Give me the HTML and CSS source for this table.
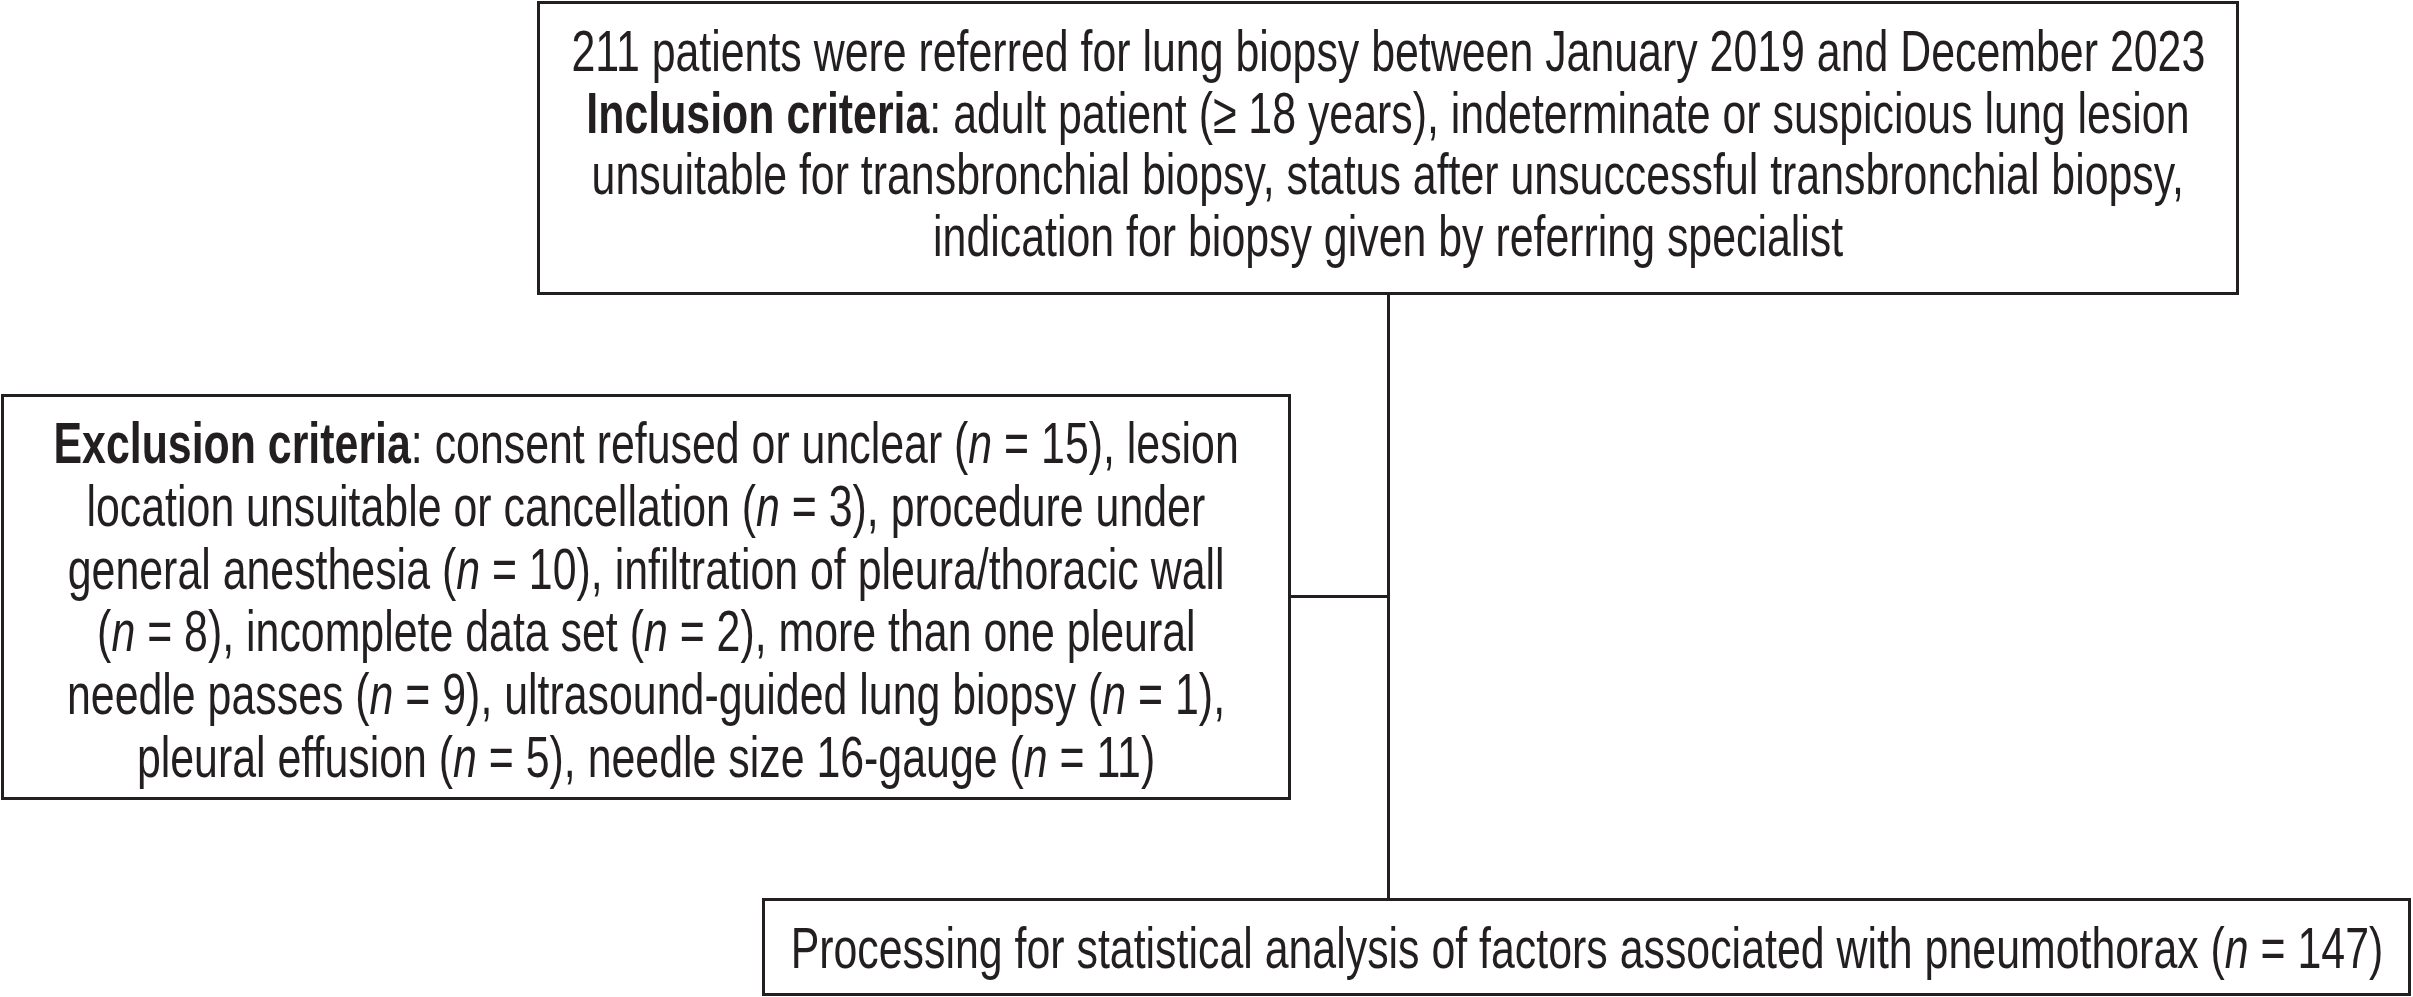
FILE: index.html
```html
<!DOCTYPE html>
<html lang="en">
<head>
<meta charset="utf-8">
<title>Flowchart</title>
<link rel="stylesheet" href="styles.css">
</head>
<body>
<div class="canvas">
  <div class="box box-top">
    <div class="line">211 patients were referred for lung biopsy between January 2019 and December 2023</div>
    <div class="line"><b>Inclusion criteria</b>: adult patient (≥ 18 years), indeterminate or suspicious lung lesion</div>
    <div class="line">unsuitable for transbronchial biopsy, status after unsuccessful transbronchial biopsy,</div>
    <div class="line">indication for biopsy given by referring specialist</div>
  </div>

  <div class="conn conn-v"></div>
  <div class="conn conn-h"></div>

  <div class="box box-excl">
    <div class="line"><b>Exclusion criteria</b>: consent refused or unclear (<i>n</i> = 15), lesion</div>
    <div class="line">location unsuitable or cancellation (<i>n</i> = 3), procedure under</div>
    <div class="line">general anesthesia (<i>n</i> = 10), infiltration of pleura/thoracic wall</div>
    <div class="line">(<i>n</i> = 8), incomplete data set (<i>n</i> = 2), more than one pleural</div>
    <div class="line">needle passes (<i>n</i> = 9), ultrasound-guided lung biopsy (<i>n</i> = 1),</div>
    <div class="line">pleural effusion (<i>n</i> = 5), needle size 16-gauge (<i>n</i> = 11)</div>
  </div>

  <div class="box box-final">
    <div class="line">Processing for statistical analysis of factors associated with pneumothorax (<i>n</i> = 147)</div>
  </div>
</div>
</body>
</html>
```
FILE: styles.css
```css
html, body {
  margin: 0;
  padding: 0;
  background: #ffffff;
}

.canvas {
  position: relative;
  width: 2413px;
  height: 997px;
  overflow: hidden;
  background: #ffffff;
  color: #231f20;
  font-family: "Liberation Sans Narrow", "Liberation Sans", Arial, sans-serif;
  font-stretch: condensed;
  font-size: 57px;
}

.box {
  position: absolute;
  box-sizing: border-box;
  border: 3px solid #231f20;
  background: #ffffff;
  display: flex;
  flex-direction: column;
  align-items: center;
}

.line {
  white-space: nowrap;
  transform: scaleX(0.752);
  transform-origin: center;
}

.line b {
  font-weight: bold;
}

.box-top {
  left: 537px;
  top: 1px;
  width: 1702px;
  height: 294px;
  padding-top: 17px;
  line-height: 61.5px;
}

.box-excl {
  left: 1px;
  top: 394px;
  width: 1290px;
  height: 406px;
  padding-top: 15px;
  line-height: 62.8px;
}

.box-final {
  left: 762px;
  top: 898px;
  width: 1649px;
  height: 98px;
  padding-top: 16px;
  line-height: 62px;
}

.conn {
  position: absolute;
  background: #231f20;
}

.conn-v {
  left: 1387px;
  top: 295px;
  width: 3px;
  height: 603px;
}

.conn-h {
  left: 1291px;
  top: 595px;
  width: 96px;
  height: 3px;
}
```
